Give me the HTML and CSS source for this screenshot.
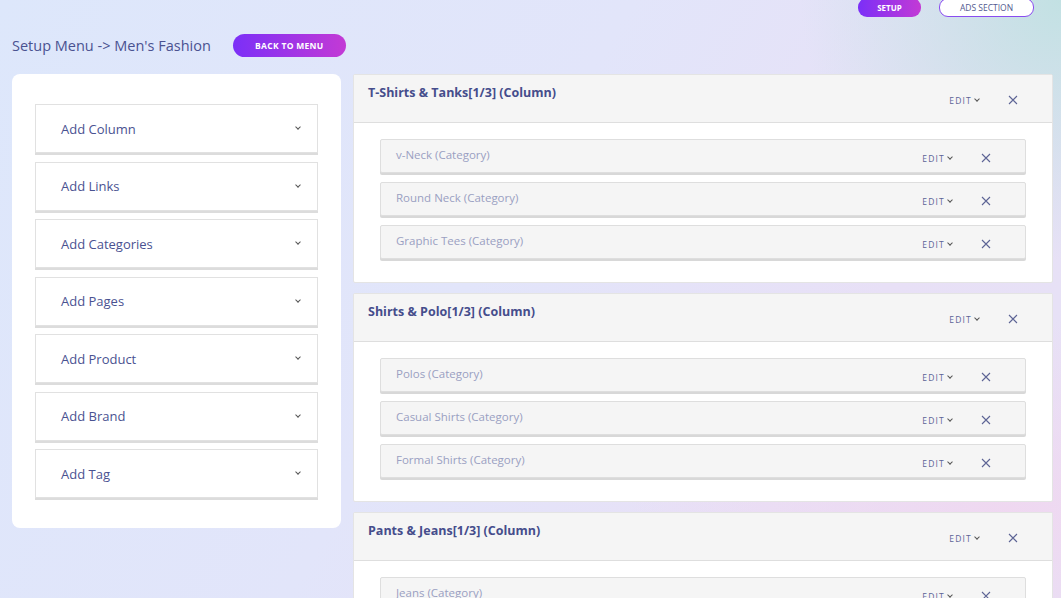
FILE: index.html
```html
<!DOCTYPE html>
<html lang="en">
<head>
    <meta charset="UTF-8">
    <title>Setup Menu</title>
    <link rel="stylesheet" href="styles.css">
</head>
<body>
    <div class="topbar">
        <button class="pill pill-fill">SETUP</button>
        <button class="pill pill-outline">ADS SECTION</button>
    </div>

    <div class="heading">
        <h1>Setup Menu -&gt; Men's Fashion</h1>
        <button class="pill pill-fill back">BACK TO MENU</button>
    </div>

    <div class="layout">
        <div class="sidebar">
            <div class="acc">Add Column <span class="chev"></span></div>
            <div class="acc">Add Links <span class="chev"></span></div>
            <div class="acc">Add Categories <span class="chev"></span></div>
            <div class="acc">Add Pages <span class="chev"></span></div>
            <div class="acc">Add Product <span class="chev"></span></div>
            <div class="acc">Add Brand <span class="chev"></span></div>
            <div class="acc">Add Tag <span class="chev"></span></div>
        </div>

        <div class="columns">
            <div class="card">
                <div class="card-head">
                    <h2>T-Shirts &amp; Tanks[1/3] (Column)</h2>
                    <div class="actions"><span class="edit">EDIT <span class="mini-chev"></span></span><svg class="close" viewBox="0 0 10 10"><path d="M1 1L9 9M9 1L1 9"/></svg></div>
                </div>
                <div class="card-body">
                    <div class="row"><span>v-Neck (Category)</span><div class="actions"><span class="edit">EDIT <span class="mini-chev"></span></span><svg class="close" viewBox="0 0 10 10"><path d="M1 1L9 9M9 1L1 9"/></svg></div></div>
                    <div class="row"><span>Round Neck (Category)</span><div class="actions"><span class="edit">EDIT <span class="mini-chev"></span></span><svg class="close" viewBox="0 0 10 10"><path d="M1 1L9 9M9 1L1 9"/></svg></div></div>
                    <div class="row"><span>Graphic Tees (Category)</span><div class="actions"><span class="edit">EDIT <span class="mini-chev"></span></span><svg class="close" viewBox="0 0 10 10"><path d="M1 1L9 9M9 1L1 9"/></svg></div></div>
                </div>
            </div>

            <div class="card">
                <div class="card-head">
                    <h2>Shirts &amp; Polo[1/3] (Column)</h2>
                    <div class="actions"><span class="edit">EDIT <span class="mini-chev"></span></span><svg class="close" viewBox="0 0 10 10"><path d="M1 1L9 9M9 1L1 9"/></svg></div>
                </div>
                <div class="card-body">
                    <div class="row"><span>Polos (Category)</span><div class="actions"><span class="edit">EDIT <span class="mini-chev"></span></span><svg class="close" viewBox="0 0 10 10"><path d="M1 1L9 9M9 1L1 9"/></svg></div></div>
                    <div class="row"><span>Casual Shirts (Category)</span><div class="actions"><span class="edit">EDIT <span class="mini-chev"></span></span><svg class="close" viewBox="0 0 10 10"><path d="M1 1L9 9M9 1L1 9"/></svg></div></div>
                    <div class="row"><span>Formal Shirts (Category)</span><div class="actions"><span class="edit">EDIT <span class="mini-chev"></span></span><svg class="close" viewBox="0 0 10 10"><path d="M1 1L9 9M9 1L1 9"/></svg></div></div>
                </div>
            </div>

            <div class="card">
                <div class="card-head">
                    <h2>Pants &amp; Jeans[1/3] (Column)</h2>
                    <div class="actions"><span class="edit">EDIT <span class="mini-chev"></span></span><svg class="close" viewBox="0 0 10 10"><path d="M1 1L9 9M9 1L1 9"/></svg></div>
                </div>
                <div class="card-body">
                    <div class="row"><span>Jeans (Category)</span><div class="actions"><span class="edit">EDIT <span class="mini-chev"></span></span><svg class="close" viewBox="0 0 10 10"><path d="M1 1L9 9M9 1L1 9"/></svg></div></div>
                </div>
            </div>
        </div>
    </div>
</body>
</html>
```

FILE: styles.css
```css
html, body {
    height: 100%;
}
body {
    margin: 0;
    font-family: "Open Sans", "Liberation Sans", sans-serif;
    color: #4a5291;
    overflow: hidden;
    background:
        radial-gradient(circle at 100% 0%, rgba(190, 225, 225, 0.9) 0, rgba(190, 225, 225, 0) 260px),
        radial-gradient(ellipse at 95% 85%, rgba(240, 215, 240, 0.9) 0, rgba(240, 215, 240, 0) 380px),
        linear-gradient(120deg, #dde7fb 0%, #e2e5fa 45%, #e8e0f6 75%, #e6e2f6 100%);
}
.topbar {
    display: flex;
    justify-content: flex-end;
    gap: 18px;
    padding-right: 27px;
    height: 18px;
}
.pill {
    font-family: "Open Sans", sans-serif;
    border-radius: 12px;
    font-size: 8px;
    font-weight: 600;
    cursor: pointer;
    padding: 0;
}
.pill-fill {
    background: linear-gradient(90deg, #7b2ff7, #c33ad5);
    color: white;
    border: none;
    font-weight: 700;
}
.topbar .pill {
    height: 19px;
    margin-top: -2px;
    border-radius: 9px;
}
.topbar .pill-fill {
    width: 63px;
}
.pill-outline {
    width: 95px;
    background: white;
    color: #535a8f;
    border: 1px solid #8a4cf0;
    font-size: 8.5px;
    font-weight: 500;
}
.heading {
    display: flex;
    align-items: center;
    gap: 22px;
    padding: 16px 12px 0;
}
h1 {
    margin: 0;
    font-size: 14.5px;
    font-weight: 400;
    color: #4a5291;
}
.back {
    width: 113px;
    height: 23px;
    font-size: 8.5px;
    letter-spacing: 0.3px;
}
.layout {
    display: flex;
    align-items: flex-start;
    gap: 12px;
    padding: 17px 8px 0 12px;
}
.sidebar {
    width: 283px;
    flex: none;
    background: white;
    border-radius: 8px;
    padding: 30px 23px 30px 23px;
    display: flex;
    flex-direction: column;
    gap: 8.5px;
}
.acc {
    height: 47px;
    border: 1px solid #e1e1e1;
    box-shadow: 0 2px 0 #dcdcdc;
    display: flex;
    align-items: center;
    justify-content: space-between;
    padding: 0 17px 0 25px;
    font-size: 13px;
    font-weight: 500;
    color: #4a5291;
}
.chev {
    width: 3px;
    height: 3px;
    border-right: 1.2px solid #555;
    border-bottom: 1.2px solid #555;
    transform: rotate(45deg);
    margin-bottom: 3px;
}
.columns {
    flex: 1;
    display: flex;
    flex-direction: column;
    gap: 10px;
}
.card {
    background: white;
    border: 1px solid #e4e4e4;
    border-radius: 2px;
}
.card-head {
    background: #f5f5f5;
    height: 47px;
    border-bottom: 1px solid #dedede;
    display: flex;
    justify-content: space-between;
    padding: 0 34px 0 14px;
}
h2 {
    margin: 9px 0 0;
    font-size: 12.5px;
    font-weight: 700;
    color: #454d8c;
}
.card-head .actions {
    margin-top: 3px;
}
.actions {
    display: flex;
    align-items: center;
    gap: 29px;
}
.edit {
    font-size: 8.5px;
    letter-spacing: 1.2px;
    color: #5d6495;
    display: flex;
    align-items: center;
    gap: 3px;
}
.mini-chev {
    width: 3px;
    height: 3px;
    border-right: 1.2px solid #555;
    border-bottom: 1.2px solid #555;
    transform: rotate(45deg);
    margin-bottom: 2px;
}
.close {
    width: 10px;
    height: 10px;
    stroke: #5d6495;
    stroke-width: 1.1;
    fill: none;
}
.card-body {
    padding: 16px 26px 23px 26px;
    display: flex;
    flex-direction: column;
    gap: 9px;
}
.row {
    height: 32px;
    background: #f5f5f5;
    border: 1px solid #dedede;
    box-shadow: 0 2px 0 #d8d8d8;
    border-radius: 2px;
    display: flex;
    justify-content: space-between;
    padding: 0 34px 0 15px;
    font-size: 11.5px;
    color: #9aa0c2;
}
.row > span {
    margin-top: 7px;
}
.row .actions {
    margin-top: 4px;
}
```
